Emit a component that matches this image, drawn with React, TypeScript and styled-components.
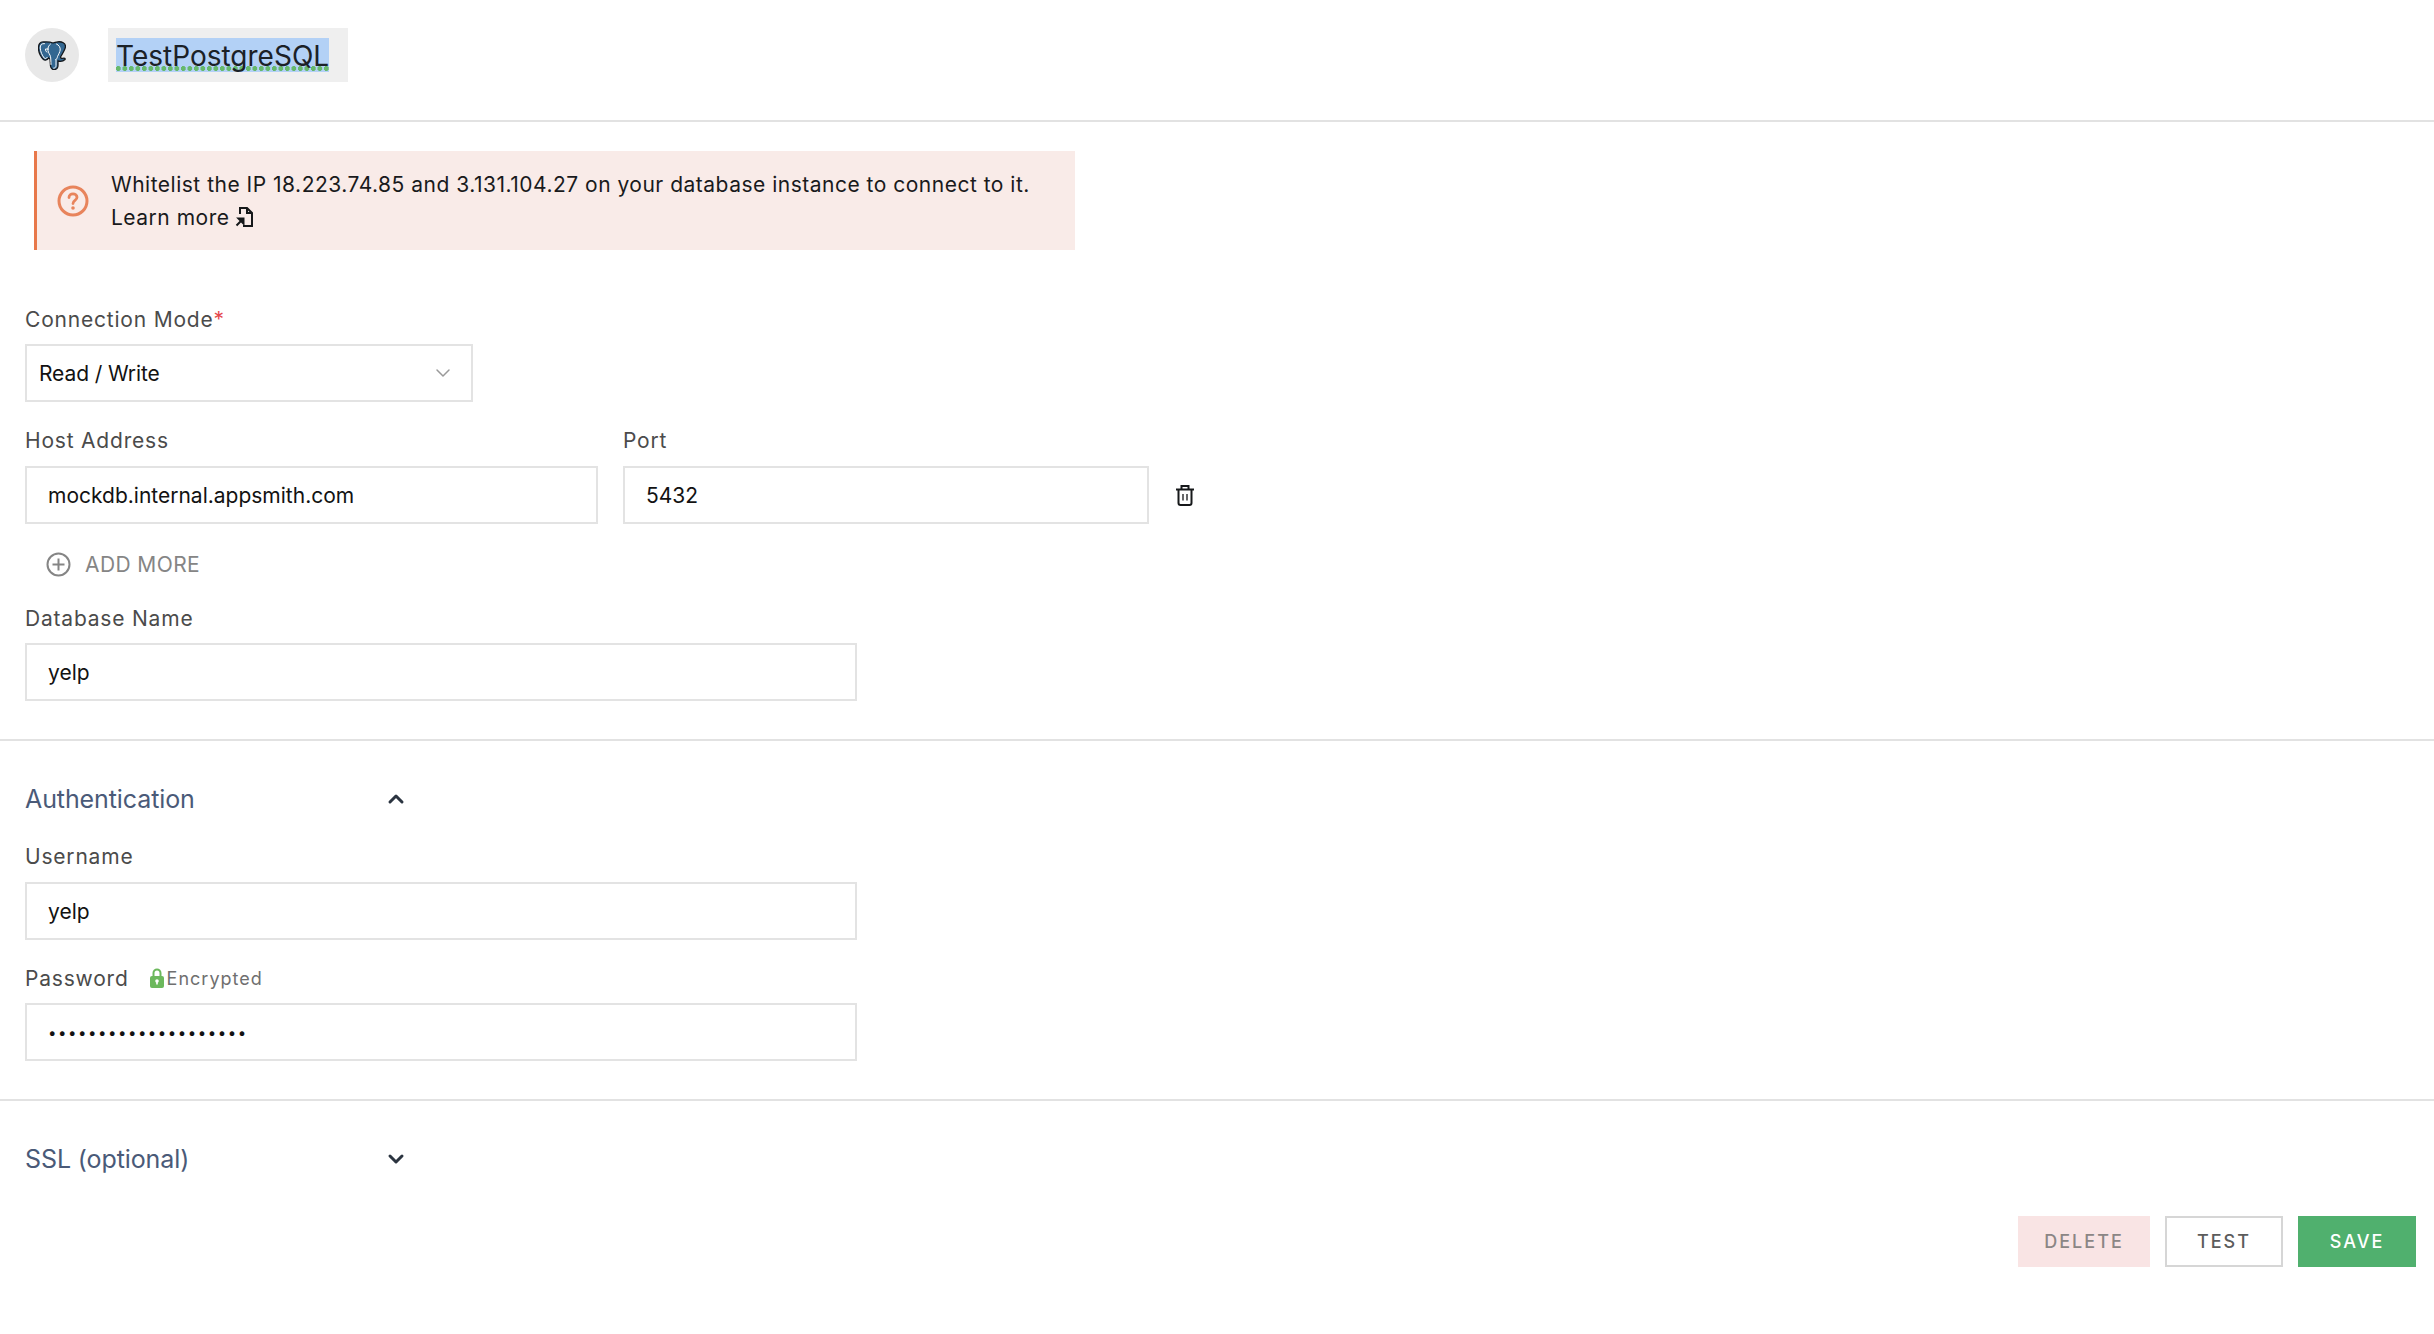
import React from 'react';
import styled, { createGlobalStyle } from 'styled-components';
import { ChevronDown, ChevronUp } from 'lucide-react';

const GlobalStyle = createGlobalStyle`
  html, body {
    margin: 0;
    padding: 0;
    background: #fff;
    font-family: Inter, "Open Sans", sans-serif;
  }
`;

const Page = styled.div`
  width: 2434px;
  height: 1334px;
  overflow: hidden;
  box-sizing: border-box;
`;

const Header = styled.header`
  display: flex;
  align-items: center;
  gap: 29px;
  height: 122px;
  box-sizing: border-box;
  padding: 0 25px 10px;
  border-bottom: 2px solid #e2e2e2;
`;

const Avatar = styled.div`
  display: flex;
  align-items: center;
  justify-content: center;
  width: 54px;
  height: 54px;
  border-radius: 50%;
  background: #e8e8e8;
`;

const TitleBox = styled.div`
  display: flex;
  align-items: center;
  width: 240px;
  height: 54px;
  box-sizing: border-box;
  padding-left: 8px;
  background: #efefef;
`;

const Title = styled.span`
  display: block;
  height: 34px;
  line-height: 36px;
  font-size: 28px;
  color: #1b2127;
  white-space: nowrap;
  background:
    radial-gradient(circle at 2.5px 2.5px, #66b96c 2.4px, transparent 2.6px) 0 calc(100% - 1px) / 6.5px 5px repeat-x,
    #b3d1f6;
`;

const Callout = styled.div`
  display: flex;
  align-items: center;
  gap: 22px;
  width: 1041px;
  height: 99px;
  box-sizing: border-box;
  margin: 29px 0 0 34px;
  padding-left: 20px;
  background: #f9ebe8;
  border-left: 3px solid #e8784a;
  font-size: 21px;
  line-height: 33px;
  letter-spacing: 0.5px;
  color: #191a1c;
`;

const LearnMore = styled.span`
  display: inline-flex;
  align-items: center;
  gap: 6px;
`;

const Section = styled.section<{ $last?: boolean }>`
  padding: 0 25px;
  border-bottom: ${p => (p.$last ? 'none' : '2px solid #e2e2e2')};
`;

const Fields = styled(Section)`
  padding-top: 57px;
  padding-bottom: 38px;
`;

const Field = styled.div<{ $width?: number; $top?: number }>`
  width: ${p => (p.$width ? `${p.$width}px` : 'auto')};
  margin-top: ${p => p.$top ?? 0}px;
`;

const Label = styled.label<{ $gap?: number }>`
  display: flex;
  align-items: center;
  height: 24px;
  margin-bottom: ${p => p.$gap ?? 13}px;
  font-size: 21px;
  letter-spacing: 0.8px;
  color: #4b4b4b;
  white-space: nowrap;
`;

const Required = styled.span`
  color: #e5484d;
`;

const Encrypted = styled.span`
  display: inline-flex;
  align-items: center;
  gap: 3px;
  margin-left: 21px;
  font-size: 18px;
  letter-spacing: 1px;
  color: #6f6f6f;
`;

const Input = styled.input`
  display: block;
  width: 100%;
  height: 58px;
  box-sizing: border-box;
  padding: 0 21px;
  border: 2px solid #e3e3e3;
  border-radius: 0;
  outline: none;
  background: #fff;
  font-family: inherit;
  font-size: 21px;
  color: #121212;

  &[type='password'] {
    letter-spacing: 1.55px;
    font-size: 15px;
  }
`;

const Select = styled.div`
  display: flex;
  align-items: center;
  justify-content: space-between;
  height: 58px;
  box-sizing: border-box;
  padding: 0 16px 0 12px;
  border: 2px solid #e3e3e3;
  font-size: 21px;
  letter-spacing: -0.1px;
  color: #121212;
`;

const HostRow = styled.div`
  display: flex;
  align-items: flex-end;
  gap: 25px;
`;

const TrashButton = styled.div`
  display: flex;
  align-items: center;
  height: 58px;
  margin-left: 1px;
`;

const AddMore = styled.div`
  display: flex;
  align-items: center;
  gap: 14px;
  height: 40px;
  margin: 20px 0 22px 21px;
  font-size: 21px;
  letter-spacing: 0.4px;
  color: #858585;
`;

const SectionHead = styled.div`
  display: flex;
  align-items: center;
  justify-content: space-between;
  width: 383px;
  height: 30px;
  font-size: 25px;
  letter-spacing: -0.1px;
  color: #4a5a78;
  svg {
    color: #2b3440;
  }
`;

const AuthSection = styled(Section)`
  padding-top: 43px;
  padding-bottom: 38px;
`;

const SslSection = styled(Section)`
  padding-top: 43px;
`;

const Footer = styled.footer`
  display: flex;
  justify-content: flex-end;
  gap: 15px;
  margin-top: 42px;
  padding-right: 18px;
`;

const Button = styled.button<{ $kind: 'danger' | 'plain' | 'primary' }>`
  width: ${p => (p.$kind === 'danger' ? 132 : 118)}px;
  height: 51px;
  box-sizing: border-box;
  padding: 0;
  border: 2px solid ${p => (p.$kind === 'plain' ? '#d6d6d6' : 'transparent')};
  border-radius: 0;
  font-family: inherit;
  font-size: 18px;
  font-weight: 500;
  letter-spacing: 2px;
  color: ${p => (p.$kind === 'primary' ? '#fff' : p.$kind === 'danger' ? '#8b8685' : '#5c5c5c')};
  background: ${p => (p.$kind === 'primary' ? '#50b06e' : p.$kind === 'danger' ? '#f9e4e4' : '#fff')};
`;

const Elephant = () => (
  <svg width="28" height="29" viewBox="0 0 28 29">
    <path
      d="M6 1C2 .5.5 3 .5 7c0 4 2.500 9 5 11.500 1.500 1.300 3.500 .5 5-1.500l1.500 1 .5 7c.5 3 2.500 4 4.500 3.500 2.500-.5 3-2.500 3-4.500v-4c2 .5 5 .5 7-1.500 .5-1-.5-1.500-2-1.200-1.500 .2-2.500-.3-2.500-1.300 2.500-4 5-8 5-10.500C27.500 2 24 .5 20 .8c-2 .2-4 .7-5 1.200C12 .8 9 .8 6 1z"
      fill="#336791"
      stroke="#15181c"
      strokeWidth="1.300"
    />
    <path
      d="M6.500 2.600C3.500 2.300 2.200 4 2.200 7c.2 3.500 2 7.500 4 10 .9 1 2 .7 3 -.6M12.500 3c-2 1.500-3 4-2.500 6.500.3 2.500 2 4 2.500 6 .3 1.500 .4 5 .5 8M10.500 8H7.500c0 1.500 .5 2.700 1.500 3.300M18.500 3c2.500 1 4 3.500 3.700 6-.3 2-1.700 4.500-2.700 6.500-.2 1.500-.7 2.500-1.700 3M18 18.500v6c0 1.700-1 2.700-2.300 2.700"
      fill="none"
      stroke="#fff"
      strokeWidth="1"
      strokeLinecap="round"
    />
  </svg>
);

const QuestionIcon = () => (
  <svg width="32" height="32" viewBox="0 0 32 32" fill="none">
    <circle cx="16" cy="16" r="14" stroke="#e8845c" strokeWidth="3" />
    <path
      d="M12 12.500c0-2.300 1.800-3.700 4-3.700s4 1.400 4 3.500c0 3.200-4 3-4 6.200"
      stroke="#e8845c"
      strokeWidth="2.800"
      strokeLinecap="round"
    />
    <circle cx="16" cy="23" r="1.800" fill="#e8845c" />
  </svg>
);

const DocLinkIcon = () => (
  <svg width="19" height="22" viewBox="0 0 19 22" fill="none">
    <path d="M5 8V2h7l5 5v13H8" stroke="#16181a" strokeWidth="2" />
    <path d="M12 2v5h5" stroke="#16181a" strokeWidth="2" />
    <path d="M1.500 19.500l6-6M3.500 12.500h5v5z" stroke="#16181a" strokeWidth="2" fill="#16181a" />
  </svg>
);

const TrashIcon = () => (
  <svg width="20" height="22" viewBox="0 0 20 22" fill="none" stroke="#16181a">
    <path d="M1 5.500h18" strokeWidth="2" />
    <path d="M6.500 5V2h7v3" strokeWidth="2" />
    <path d="M3.500 5.500V19a2 2 0 0 0 2 2h9a2 2 0 0 0 2-2V5.500" strokeWidth="2" />
    <path d="M8 10v6.500M12 10v6.500" strokeWidth="1.300" />
  </svg>
);

const AddIcon = () => (
  <svg width="25" height="25" viewBox="0 0 25 25" fill="none" stroke="#858585" strokeWidth="2">
    <circle cx="12.500" cy="12.500" r="11" />
    <path d="M12.500 6.500v12M6.500 12.500h12" />
  </svg>
);

const LockIcon = () => (
  <svg width="14" height="20" viewBox="0 0 14 20">
    <path d="M3.500 9V5a3.500 3.500 0 0 1 7 0v4" fill="none" stroke="#6cb85c" strokeWidth="2" />
    <rect x="0" y="8" width="14" height="12" rx="2" fill="#6cb85c" />
    <circle cx="7" cy="13" r="1.800" fill="#fff" />
    <rect x="6.200" y="13" width="1.600" height="3.500" fill="#fff" />
  </svg>
);

const App: React.FC = () => {
  return (
    <Page>
      <GlobalStyle />
      <Header>
        <Avatar>
          <Elephant />
        </Avatar>
        <TitleBox>
          <Title>TestPostgreSQL</Title>
        </TitleBox>
      </Header>

      <Callout>
        <QuestionIcon />
        <div>
          Whitelist the IP 18.223.74.85 and 3.131.104.27 on your database instance to connect to it.
          <br />
          <LearnMore>
            Learn more <DocLinkIcon />
          </LearnMore>
        </div>
      </Callout>

      <Fields>
        <Field $width={448}>
          <Label>
            Connection Mode<Required>*</Required>
          </Label>
          <Select>
            Read / Write
            <ChevronDown size={24} strokeWidth={1.5} color="#9a9a9a" />
          </Select>
        </Field>

        <HostRow>
          <Field $width={573} $top={26}>
            <Label $gap={14}>Host Address</Label>
            <Input readOnly value="mockdb.internal.appsmith.com" />
          </Field>
          <Field $width={526}>
            <Label $gap={14}>Port</Label>
            <Input readOnly value="5432" />
          </Field>
          <TrashButton>
            <TrashIcon />
          </TrashButton>
        </HostRow>

        <AddMore>
          <AddIcon />
          ADD MORE
        </AddMore>

        <Field $width={832}>
          <Label>Database Name</Label>
          <Input readOnly value="yelp" />
        </Field>
      </Fields>

      <AuthSection>
        <SectionHead>
          Authentication
          <ChevronUp size={24} strokeWidth={3} />
        </SectionHead>
        <Field $width={832} $top={30}>
          <Label $gap={14}>Username</Label>
          <Input readOnly value="yelp" />
        </Field>
        <Field $width={832} $top={26}>
          <Label>
            Password
            <Encrypted>
              <LockIcon />
              Encrypted
            </Encrypted>
          </Label>
          <Input readOnly type="password" value="yelpyelpyelpyelpyelp" />
        </Field>
      </AuthSection>

      <SslSection $last>
        <SectionHead>
          SSL (optional)
          <ChevronDown size={24} strokeWidth={3} />
        </SectionHead>
      </SslSection>

      <Footer>
        <Button $kind="danger">DELETE</Button>
        <Button $kind="plain">TEST</Button>
        <Button $kind="primary">SAVE</Button>
      </Footer>
    </Page>
  );
};

export default App;
